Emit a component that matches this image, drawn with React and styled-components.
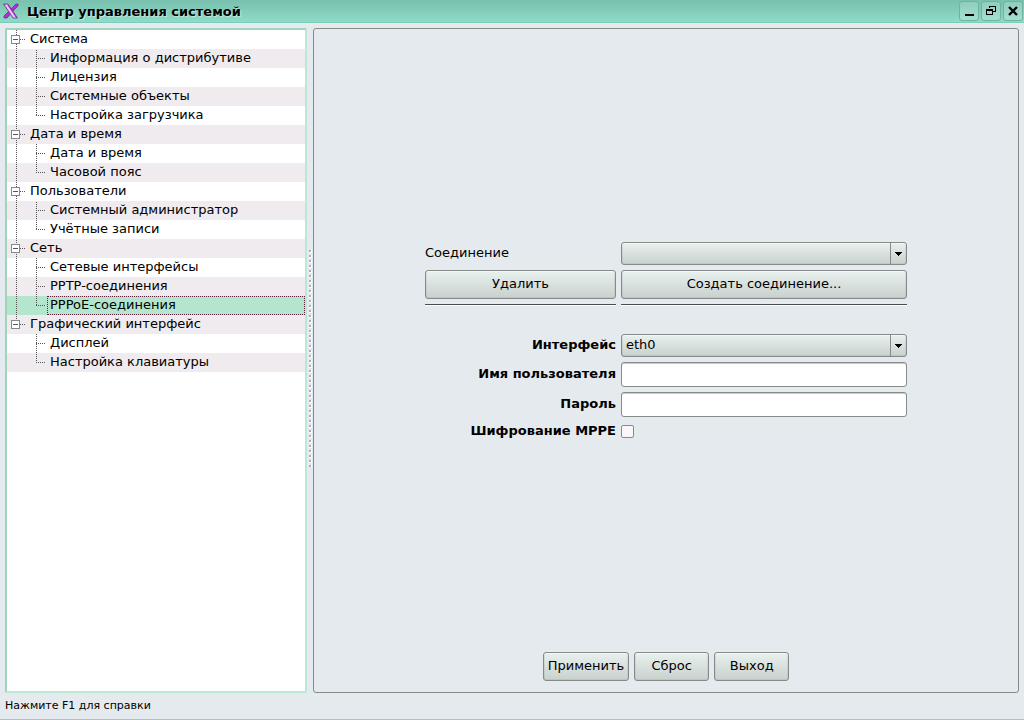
import React, { useState } from "react"
import styled, { createGlobalStyle, css } from "styled-components"

const sections = [
    {
        title: "Система",
        items: ["Информация о дистрибутиве", "Лицензия", "Системные объекты", "Настройка загрузчика"],
    },
    { title: "Дата и время", items: ["Дата и время", "Часовой пояс"] },
    { title: "Пользователи", items: ["Системный администратор", "Учётные записи"] },
    { title: "Сеть", items: ["Сетевые интерфейсы", "PPTP-соединения", "PPPoE-соединения"] },
    { title: "Графический интерфейс", items: ["Дисплей", "Настройка клавиатуры"] },
]

// flat list of visible rows, so stripes and guide lines can follow the row index
const getRows = (closed) => {
    const rows = []
    sections.forEach((section, s) => {
        const lastSection = s === sections.length - 1
        rows.push({ key: section.title, title: section.title, root: true, open: !closed[section.title], lastSection })
        if (closed[section.title]) return
        section.items.forEach((item, i) => {
            rows.push({
                key: section.title + "/" + item,
                title: item,
                lastSection,
                lastItem: i === section.items.length - 1,
            })
        })
    })
    return rows
}

const Logo = () => (
    <svg width="16" height="16" viewBox="0 0 16 16" aria-hidden="true">
        <path d="M13 1h2v2l-5 5-6 7H1v-2l6-6z" fill="#b02fd6" stroke="#5b3a78" strokeWidth="0.8" />
        <path d="M0.500 1h4.500l9.500 14H10z" fill="#e59bf5" stroke="#5b3a78" strokeWidth="0.8" />
        <path d="M3 2l8.500 12.500" stroke="#fbe6ff" strokeWidth="1" />
        <path d="M5 2l8.500 12.500" stroke="#9a1fc0" strokeWidth="1" />
    </svg>
)

const MinimizeIcon = () => (
    <svg width="10" height="10" viewBox="0 0 10 10" shapeRendering="crispEdges" aria-hidden="true">
        <path d="M1 8h9v2H1z" />
    </svg>
)

const RestoreIcon = () => (
    <svg width="10" height="10" viewBox="0 0 10 10" shapeRendering="crispEdges" aria-hidden="true">
        <path d="M3 0h7v6H7V5h2V1H4v1H3z" />
        <path fillRule="evenodd" d="M0 3h7v6H0zM1 5v3h5V5z" />
    </svg>
)

const CloseIcon = () => (
    <svg width="10" height="10" viewBox="0 0 10 10" fill="none" stroke="#000" strokeWidth="2.400" aria-hidden="true">
        <path d="M1 1l8 8M9 1L1 9" />
    </svg>
)

const Combo = ({ id, options }) => (
    <ComboBox>
        <select id={id}>
            {options.map((option) => (
                <option key={option}>{option}</option>
            ))}
        </select>
        <ComboArrow>
            <svg width="7" height="4" viewBox="0 0 7 4" shapeRendering="crispEdges" aria-hidden="true">
                <path d="M0 0h7v1H6v1H5v1H4v1H3V3H2V2H1V1H0z" />
            </svg>
        </ComboArrow>
    </ComboBox>
)

const Tree = () => {
    const [closed, setClosed] = useState({})
    const [selected, setSelected] = useState("Сеть/PPPoE-соединения")
    const toggle = (key) => setClosed({ ...closed, [key]: !closed[key] })

    return (
        <TreeView role="tree">
            {getRows(closed).map((row, index) => (
                <TreeRow key={row.key} $odd={index % 2 === 1} $selected={row.key === selected} role="treeitem">
                    {row.root ? (
                        <RootGuide $odd={index % 2 === 1} $last={row.lastSection}>
                            <Expander onClick={() => toggle(row.key)} aria-label={row.title}>
                                <svg width="7" height="7" viewBox="0 0 7 7" shapeRendering="crispEdges" aria-hidden="true">
                                    <path d={row.open ? "M1 3h5v1H1z" : "M1 3h5v1H1zM3 1h1v5H3z"} fill="#555" />
                                </svg>
                            </Expander>
                        </RootGuide>
                    ) : (
                        <ItemGuide $odd={index % 2 === 1} $trunk={!row.lastSection} $last={row.lastItem} />
                    )}
                    <TreeLabel $selected={row.key === selected} onClick={() => setSelected(row.key)}>
                        {row.title}
                    </TreeLabel>
                </TreeRow>
            ))}
        </TreeView>
    )
}

const ConnectionForm = () => (
    <Form>
        <label htmlFor="connection">Соединение</label>
        <Combo id="connection" options={[""]} />
        <Button>Удалить</Button>
        <Button>Создать соединение...</Button>
        <Separator />
        <Separator />
        <FieldLabel htmlFor="interface">Интерфейс</FieldLabel>
        <Combo id="interface" options={["eth0"]} />
        <FieldLabel htmlFor="user">Имя пользователя</FieldLabel>
        <TextInput id="user" type="text" />
        <FieldLabel htmlFor="password">Пароль</FieldLabel>
        <TextInput id="password" type="password" />
        <FieldLabel htmlFor="mppe">Шифрование MPPE</FieldLabel>
        <CheckBox id="mppe" type="checkbox" />
    </Form>
)

const App = () => {
    return (
        <Window>
            <GlobalStyle />
            <TitleBar>
                <Logo />
                <h1>Центр управления системой</h1>
                <WindowButton aria-label="Свернуть"><MinimizeIcon /></WindowButton>
                <WindowButton aria-label="Восстановить"><RestoreIcon /></WindowButton>
                <WindowButton aria-label="Закрыть"><CloseIcon /></WindowButton>
            </TitleBar>
            <Main>
                <Tree />
                <Splitter><SplitterGrip /></Splitter>
                <Panel>
                    <FormArea>
                        <ConnectionForm />
                    </FormArea>
                    <Actions>
                        <Button>Применить</Button>
                        <Button>Сброс</Button>
                        <Button>Выход</Button>
                    </Actions>
                </Panel>
            </Main>
            <StatusBar>Нажмите F1 для справки</StatusBar>
        </Window>
    )
}

export default App

const GlobalStyle = createGlobalStyle`
    * {
        box-sizing: border-box;
    }
    body {
        margin: 0;
        background-color: #e5eaee;
    }
    body, button, input, select {
        font-family: "DejaVu Sans", sans-serif;
        font-size: 13px;
        line-height: 17px;
        color: #000;
    }
`
const Window = styled.div`
    display: flex;
    flex-direction: column;
    min-height: 100vh;
    border-bottom: 1px solid #b8bdc0;
`
const TitleBar = styled.header`
    display: flex;
    align-items: center;
    gap: 2px;
    height: 23px;
    padding: 0 1px 0 3px;
    background: linear-gradient(#79c0ae, #8fdac8);
    border-bottom: 1px solid #7bcdb7;
    > h1 {
        flex: 1;
        margin: 0;
        padding-left: 6px;
        font-size: 13px;
        font-weight: 700;
        text-shadow: 1px 1px 1px #c4ece0;
    }
`
const WindowButton = styled.button`
    display: flex;
    align-items: center;
    justify-content: center;
    width: 20px;
    height: 20px;
    padding: 0;
    border: 1px solid #6db3a0;
    border-radius: 3px;
    background: linear-gradient(#8fcdbd, #a3e0d1);
`
const Main = styled.main`
    flex: 1;
    display: flex;
    padding: 5px 5px 0;
`
const TreeView = styled.ul`
    width: 302px;
    margin: 0;
    padding: 0;
    list-style: none;
    background-color: #fff;
    border: 2px solid #b9e9d5;
    border-top-color: #9fd3bc;
    border-left-color: #9fd3bc;
    border-radius: 2px;
`
const TreeRow = styled.li`
    display: flex;
    height: 19px;
    background-color: ${(props) => (props.$selected ? "#b4e6cd" : props.$odd ? "#efebee" : "#fff")};
`
const dotsDown = "repeating-linear-gradient(to bottom, #555 0 1px, transparent 1px 2px)"
const dotsRight = "repeating-linear-gradient(to right, #555 0 1px, transparent 1px 2px)"

const RootGuide = styled.div`
    flex: none;
    width: 20px;
    padding: 5px 0 0 4px;
    background:
        ${dotsRight} 13px 9px / 6px 1px no-repeat,
        ${dotsDown} 9px ${(props) => (props.$odd ? 1 : 0)}px / 1px ${(props) => (props.$last ? "8px" : "100%")} no-repeat;
`
const ItemGuide = styled.div`
    flex: none;
    width: 40px;
    ${(props) => css`
        background:
            ${dotsRight} 29px 9px / 10px 1px no-repeat,
            ${dotsDown} 29px ${props.$odd ? 1 : 0}px / 1px ${props.$last ? "9px" : "100%"} no-repeat,
            ${dotsDown} 9px ${props.$odd ? 1 : 0}px / ${props.$trunk ? "1px" : "0"} 100% no-repeat;
    `}
`
const Expander = styled.button`
    display: block;
    width: 9px;
    height: 9px;
    padding: 0;
    border: 1px solid #858a88;
    background-color: #fff;
    > svg {
        display: block;
    }
`
const TreeLabel = styled.button`
    flex: 1;
    padding: 0 2px 2px;
    border: 1px ${(props) => (props.$selected ? "dotted #5a1f3c" : "solid transparent")};
    background: none;
    line-height: 15px;
    text-align: left;
    white-space: nowrap;
    outline: none;
`
const Splitter = styled.div`
    display: flex;
    align-items: center;
    justify-content: flex-end;
    width: 6px;
    padding: 0 1px 4px 0;
    cursor: col-resize;
`
const SplitterGrip = styled.div`
    width: 3px;
    height: 217px;
    background:
        conic-gradient(from 0deg at 2px 2px, transparent 75%, #a9afb2 0) 0 0 / 3px 5px,
        linear-gradient(#fff 3px, transparent 0) 0 0 / 3px 5px;
`
const Panel = styled.section`
    flex: 1;
    display: flex;
    flex-direction: column;
    border: 1px solid #868a88;
    border-radius: 3px;
`
const FormArea = styled.div`
    flex: 1;
    display: flex;
    align-items: center;
    justify-content: center;
    padding-top: 2px;
`
const Form = styled.div`
    display: grid;
    grid-template-columns: 191fr 286fr;
    align-items: center;
    gap: 5px;
    width: 100%;
    max-width: 482px;
    > label {
        padding-bottom: 2px;
    }
`
const raised = css`
    border: 1px solid #868a88;
    border-radius: 3px;
    background: linear-gradient(#e9f1ee, #c9d1cf);
    box-shadow: inset 0 1px 0 #f4f8f6, inset 0 0 0 1px rgba(120, 130, 126, 0.15);
`
const Button = styled.button`
    ${raised}
    min-width: 75px;
    height: 29px;
    padding: 0 4px 2px;
`
const Separator = styled.hr`
    width: 100%;
    height: 2px;
    margin: 0 0 23px;
    border: 0;
    border-top: 1px solid #4b4e50;
    border-bottom: 1px solid #fff;
`
const FieldLabel = styled.label`
    font-weight: 700;
    text-align: right;
`
const ComboBox = styled.div`
    ${raised}
    display: grid;
    grid-template-columns: 1fr 16px;
    height: 23px;
    > select {
        grid-area: 1 / 1 / 2 / 3;
        appearance: none;
        padding: 0 20px 2px 4px;
        border: 0;
        background: none;
        outline: none;
    }
`
const ComboArrow = styled.span`
    grid-area: 1 / 2 / 2 / 3;
    display: flex;
    align-items: center;
    justify-content: center;
    border-left: 1px solid #868a88;
    pointer-events: none;
`
const TextInput = styled.input`
    width: 100%;
    height: 25px;
    padding: 0 4px;
    border: 1px solid #868a88;
    border-radius: 3px;
    background-color: #fff;
    box-shadow: inset 0 1px 0 #c8cccb;
    outline: none;
`
const CheckBox = styled.input`
    appearance: none;
    width: 13px;
    height: 13px;
    margin: 3px 0;
    border: 1px solid #868a88;
    border-radius: 2px;
    background-color: #faf7f9;
    &:checked {
        background-color: #6fb8a5;
    }
`
const Actions = styled.div`
    display: flex;
    justify-content: center;
    gap: 5px;
    padding-bottom: 11px;
`
const StatusBar = styled.footer`
    height: 26px;
    padding: 4px 5px;
    font-size: 11px;
`
